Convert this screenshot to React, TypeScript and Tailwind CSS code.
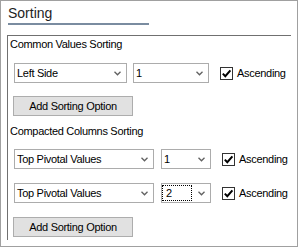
import React from 'react';

const Chevron = () => (
  <svg width="7" height="5" viewBox="0 0 7 5" className="shrink-0">
    <polyline points="0.5,0.8 3.5,3.8 6.5,0.8" fill="none" stroke="#606060" strokeWidth="1.3" />
  </svg>
);

interface SelectProps {
  value: string;
  width: string;
  focused?: boolean;
}

const Select: React.FC<SelectProps> = ({ value, width, focused }) => (
  <div className={`${width} h-[20px] border border-[#acacac] bg-white flex items-center justify-between pl-[2px] pr-[5px]`}>
    {focused ? (
      <span className="h-[14px] w-[28px] outline-1 outline-dotted outline-black -ml-[1px] pl-[3px] leading-[14px]">
        {value}
      </span>
    ) : (
      <span className="leading-[14px]">{value}</span>
    )}
    <Chevron />
  </div>
);

const Checkbox = () => (
  <div className="flex items-center">
    <div className="w-[13px] h-[13px] border border-[#333333] bg-white flex items-center justify-center">
      <svg width="11" height="11" viewBox="0 0 11 11">
        <path d="M1.8 5.6 L4.3 8.2 L9.4 2.4" fill="none" stroke="#000" strokeWidth="2" />
      </svg>
    </div>
    <span className="ml-[4px] leading-[13px]">Ascending</span>
  </div>
);

const SortRow: React.FC<{ first: string; second: string; w1: string; w2: string; gap: string; focused?: boolean }> = ({
  first,
  second,
  w1,
  w2,
  gap,
  focused,
}) => (
  <div className="flex items-center ml-[4px]">
    <Select value={first} width={w1} />
    <div className={gap}>
      <Select value={second} width={w2} focused={focused} />
    </div>
    <div className="ml-[11px]">
      <Checkbox />
    </div>
  </div>
);

const AddButton = () => (
  <button className="ml-[3px] w-[120px] h-[20px] bg-[#e1e1e1] border border-[#adadad] flex items-center justify-center leading-[14px] text-black">
    Add Sorting Option
  </button>
);

export default function App() {
  return (
    <div
      className="w-[298px] h-[247px] border border-[#a0a0a0] bg-white flex flex-col pl-[6px] pr-[6px] text-[11px] tracking-[-0.3px] text-black"
      style={{ fontFamily: '"Liberation Sans", Arial, sans-serif' }}
    >
      <div className="ml-[1px] pt-[4px]">
        <div className="text-[14px] leading-[17px] tracking-normal text-[#1e1e1e]">Sorting</div>
        <div className="mt-[1px] h-[2px] w-[141px] bg-[#7a8ca0]" />
      </div>

      <div className="mt-[10px] mb-[6px] flex-1 w-[284px] border-t border-l border-[#707070] pl-[2px] pt-[2px] flex flex-col">
        <div className="leading-[13px]">Common Values Sorting</div>
        <div className="mt-[12px]">
          <SortRow first="Left Side" second="1" w1="w-[113px]" w2="w-[76px]" gap="ml-[6px]" />
        </div>
        <div className="mt-[13px]">
          <AddButton />
        </div>

        <div className="mt-[9px] leading-[13px]">Compacted Columns Sorting</div>
        <div className="mt-[11px]">
          <SortRow first="Top Pivotal Values" second="1" w1="w-[140px]" w2="w-[50px]" gap="ml-[7px]" />
        </div>
        <div className="mt-[14px]">
          <SortRow first="Top Pivotal Values" second="2" w1="w-[140px]" w2="w-[50px]" gap="ml-[7px]" focused />
        </div>
        <div className="mt-[14px]">
          <AddButton />
        </div>
      </div>
    </div>
  );
}
